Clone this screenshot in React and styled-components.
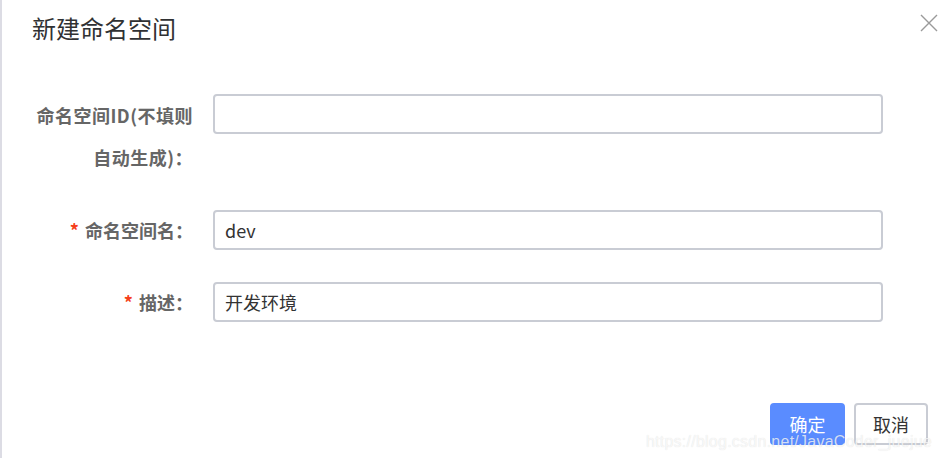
import React, { useState } from "react";
import styled, { createGlobalStyle } from "styled-components";

const GlobalStyle = createGlobalStyle`
  html, body {
    margin: 0;
    padding: 0;
    background: #fff;
  }
  body {
    font-family: "Noto Sans CJK SC", "Liberation Sans", sans-serif;
  }
`;

const CloseIcon = () => (
  <svg width="18" height="18" viewBox="0 0 18 18">
    <path d="M1 1 L17 17 M17 1 L1 17" stroke="#9a9a9a" strokeWidth="1.4" fill="none" />
  </svg>
);

const App = () => {
  const [name, setName] = useState("dev");
  const [desc, setDesc] = useState("开发环境");

  return (
    <Dialog>
      <GlobalStyle />
      <Header>
        <Title>新建命名空间</Title>
        <CloseButton aria-label="close">
          <CloseIcon />
        </CloseButton>
      </Header>
      <Form>
        <Row>
          <Label>
            命名空间ID(不填则
            <br />
            自动生成)：
          </Label>
          <Input value="" onChange={() => {}} />
        </Row>
        <Row>
          <Label required>命名空间名：</Label>
          <Input value={name} onChange={(e) => setName(e.target.value)} />
        </Row>
        <Row>
          <Label required>描述：</Label>
          <Input value={desc} onChange={(e) => setDesc(e.target.value)} />
        </Row>
      </Form>
      <Footer>
        <Button primary>确定</Button>
        <Button>取消</Button>
      </Footer>
      <Watermark>https://blog.csdn.net/JavaCoder_juejue</Watermark>
    </Dialog>
  );
};

export default App;

const Dialog = styled.div`
  position: relative;
  box-sizing: border-box;
  width: 942px;
  height: 458px;
  border-left: 2px solid #dcdce4;
  background: #fff;
  overflow: hidden;
`;

const Header = styled.div`
  display: flex;
  align-items: flex-start;
  justify-content: space-between;
  padding: 15px 4px 0 30px;
  height: 39px;
`;

const Title = styled.div`
  font-size: 24px;
  line-height: 26px;
  color: #303133;
`;

const CloseButton = styled.button`
  border: none;
  background: transparent;
  padding: 0;
  margin-top: -1px;
  cursor: pointer;
`;

const Form = styled.div`
  display: flex;
  flex-direction: column;
  gap: 32px;
  padding-top: 40px;
`;

const Row = styled.div`
  display: grid;
  grid-template-columns: 191px 670px;
  column-gap: 20px;
  align-items: start;
`;

const Label = styled.label`
  text-align: right;
  font-size: 18px;
  font-weight: bold;
  line-height: ${(p) => (p.required ? "40px" : "42px")};
  color: #666;
  white-space: nowrap;
  letter-spacing: ${(p) => (p.required ? "0" : "0.5px")};

  &::before {
    content: ${(p) => (p.required ? '"*"' : "none")};
    color: #f53f1a;
    margin-right: 6px;
  }
`;

const Input = styled.input`
  box-sizing: border-box;
  width: 670px;
  height: 40px;
  border: 2px solid #c9ccd4;
  border-radius: 4px;
  padding: 0 10px;
  font-family: "Noto Sans CJK SC", "Liberation Sans", sans-serif;
  font-size: 18px;
  color: #333;
  outline: none;
`;

const Footer = styled.div`
  display: flex;
  justify-content: flex-end;
  gap: 9px;
  padding-right: 14px;
  margin-top: 81px;
`;

const Button = styled.button`
  box-sizing: border-box;
  width: ${(p) => (p.primary ? "75px" : "74px")};
  height: 42px;
  border-radius: 4px;
  border: 2px solid ${(p) => (p.primary ? "#5a8cff" : "#c9ccd4")};
  background: ${(p) => (p.primary ? "#5a8cff" : "#fff")};
  color: ${(p) => (p.primary ? "#fff" : "#333")};
  font-family: "Noto Sans CJK SC", "Liberation Sans", sans-serif;
  font-size: 18px;
  padding: 0;
  cursor: pointer;
`;

const Watermark = styled.div`
  position: absolute;
  right: 10px;
  bottom: 7px;
  font-family: "Liberation Sans", Arial, sans-serif;
  font-size: 16px;
  letter-spacing: 0.25px;
  color: rgba(255, 255, 255, 0.75);
  text-shadow: 0 0 1px rgba(0, 0, 0, 0.14);
  pointer-events: none;
`;
